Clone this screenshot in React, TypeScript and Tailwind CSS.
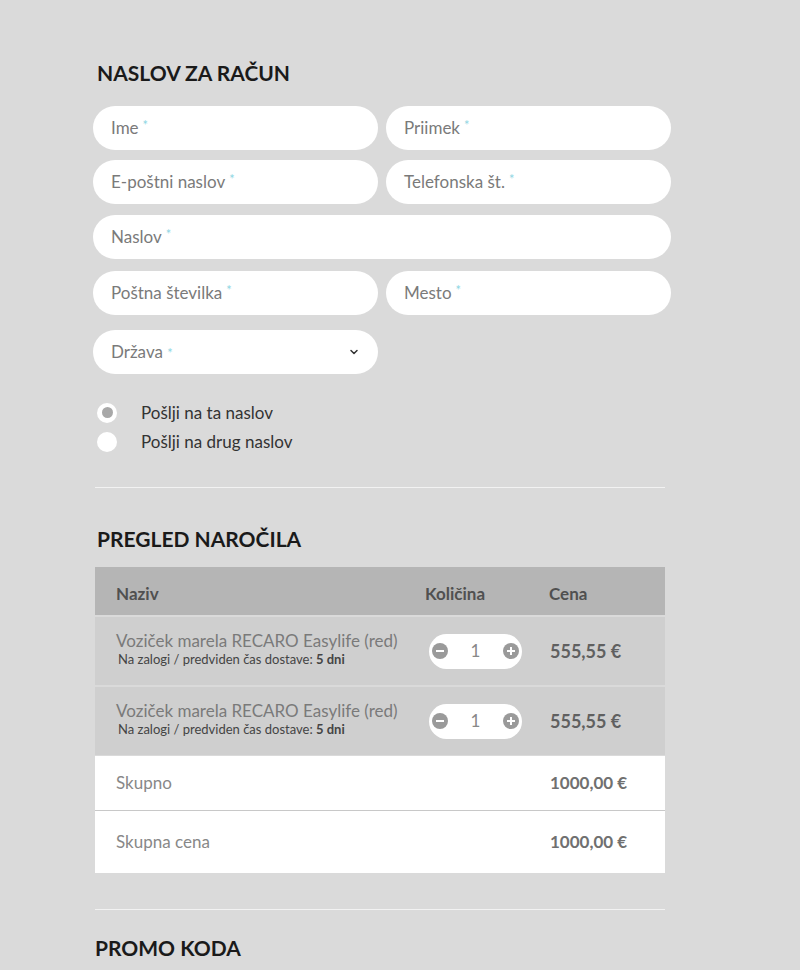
import { ChevronDown } from "lucide-react"

const font = { fontFamily: "Lato, 'Open Sans', sans-serif" }

const Field = ({ label, className = "" }: { label: string; className?: string }) => (
  <div className={`h-[44px] rounded-full bg-white flex items-center px-[18px] text-[17px] text-[#7a7a7a] ${className}`}>
    {label} <span className="text-[#8fd6e3] ml-1 text-[13px] -mt-1">*</span>
  </div>
)

const Qty = () => (
  <div className="w-[93px] h-[35px] rounded-full bg-white flex items-center justify-between px-[3px]">
    <span className="w-[16px] h-[16px] rounded-full bg-[#9a9a9a] flex items-center justify-center">
      <span className="w-[8px] h-[2px] bg-white" />
    </span>
    <span className="text-[17px] text-[#888]">1</span>
    <span className="w-[16px] h-[16px] rounded-full bg-[#9a9a9a] flex items-center justify-center relative">
      <span className="w-[8px] h-[2px] bg-white" />
      <span className="absolute w-[2px] h-[8px] bg-white" />
    </span>
  </div>
)

const items = [1, 2]

export default function App() {
  return (
    <div className="min-h-[970px] bg-[#dadada] pl-[93px] pt-[60px]" style={font}>
      <div className="w-[578px]">
        <h2 className="text-[21px] font-bold text-[#1a1a1a] pl-[4px] leading-[26px]">NASLOV ZA RAČUN</h2>

        <div className="mt-[20px] flex flex-col gap-[10px]">
          <div className="grid grid-cols-2 gap-[8px]">
            <Field label="Ime" />
            <Field label="Priimek" />
          </div>
          <div className="grid grid-cols-2 gap-[8px]">
            <Field label="E-poštni naslov" />
            <Field label="Telefonska št." />
          </div>
          <Field label="Naslov" className="mt-[1px]" />
          <div className="grid grid-cols-2 gap-[8px] mt-[2px]">
            <Field label="Poštna številka" />
            <Field label="Mesto" />
          </div>
          <div className="mt-[5px] w-[285px] h-[44px] rounded-full bg-white flex items-center justify-between px-[18px] text-[17px] text-[#7a7a7a]">
            <span>
              Država <span className="text-[#8fd6e3] text-[13px]">*</span>
            </span>
            <ChevronDown size={12} strokeWidth={3} className="text-[#333]" />
          </div>
        </div>

        <div className="mt-[28px] flex flex-col gap-[8px] pl-[4px]">
          <label className="flex items-center gap-[24px] text-[17px] text-[#333] leading-[21px]">
            <span className="w-[20px] h-[20px] rounded-full bg-white flex items-center justify-center">
              <span className="w-[11px] h-[11px] rounded-full bg-[#a8a8a8]" />
            </span>
            Pošlji na ta naslov
          </label>
          <label className="flex items-center gap-[24px] text-[17px] text-[#333] leading-[21px]">
            <span className="w-[20px] h-[20px] rounded-full bg-white" />
            Pošlji na drug naslov
          </label>
        </div>

        <div className="mt-[35px] ml-[2px] w-[570px] h-px bg-[#f2f2f2]" />

        <h2 className="mt-[38px] text-[21px] font-bold text-[#1a1a1a] pl-[4px] leading-[26px]">PREGLED NAROČILA</h2>

        <div className="mt-[15px] ml-[2px] w-[570px] text-[#666]">
          <div className="h-[48px] bg-[#b5b5b5] grid grid-cols-[310px_144px_1fr] items-center pt-[6px] text-[17px] font-bold text-[#505050]">
            <span className="pl-[21px]">Naziv</span>
            <span className="pl-[20px]">Količina</span>
            <span>Cena</span>
          </div>
          {items.map((i) => (
            <div key={i} className="mt-[2px] h-[68px] bg-[#cfcfcf] grid grid-cols-[310px_144px_1fr] items-center">
              <div className="pl-[21px] pb-[4px]">
                <div className="text-[17px] text-[#7a7a7a] leading-[20px]">Voziček marela RECARO Easylife (red)</div>
                <div className="text-[13px] text-[#444] leading-[16px] pl-[2px]">
                  Na zalogi / predviden čas dostave: <b>5 dni</b>
                </div>
              </div>
              <div className="pl-[24px]">
                <Qty />
              </div>
              <span className="text-[18px] font-bold text-[#606060] pl-[1px]">555,55 €</span>
            </div>
          ))}
          <div className="mt-[1px] h-[55px] bg-white grid grid-cols-[454px_1fr] items-center pl-[21px] border-b border-[#c8c8c8]">
            <span className="text-[17px] text-[#888]">Skupno</span>
            <span className="text-[17px] font-bold text-[#707070] -ml-[20px]">1000,00 €</span>
          </div>
          <div className="h-[62px] bg-white grid grid-cols-[454px_1fr] items-center pl-[21px]">
            <span className="text-[17px] text-[#888]">Skupna cena</span>
            <span className="text-[17px] font-bold text-[#707070] -ml-[20px]">1000,00 €</span>
          </div>
        </div>

        <div className="mt-[36px] ml-[2px] w-[570px] h-px bg-[#f2f2f2]" />

        <h2 className="mt-[25px] text-[21px] font-bold text-[#1a1a1a] pl-[2px] leading-[26px]">PROMO KODA</h2>
      </div>
    </div>
  )
}
